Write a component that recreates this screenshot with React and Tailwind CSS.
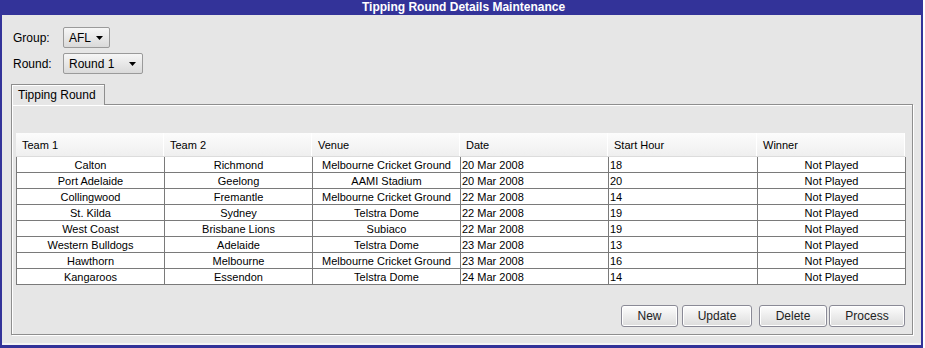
import React from "react";

const rows = [
  ["Calton", "Richmond", "Melbourne Cricket Ground", "20 Mar 2008", "18"],
  ["Port Adelaide", "Geelong", "AAMI Stadium", "20 Mar 2008", "20"],
  ["Collingwood", "Fremantle", "Melbourne Cricket Ground", "22 Mar 2008", "14"],
  ["St. Kilda", "Sydney", "Telstra Dome", "22 Mar 2008", "19"],
  ["West Coast", "Brisbane Lions", "Subiaco", "22 Mar 2008", "19"],
  ["Western Bulldogs", "Adelaide", "Telstra Dome", "23 Mar 2008", "13"],
  ["Hawthorn", "Melbourne", "Melbourne Cricket Ground", "23 Mar 2008", "16"],
  ["Kangaroos", "Essendon", "Telstra Dome", "24 Mar 2008", "14"],
];

const headers = ["Team 1", "Team 2", "Venue", "Date", "Start Hour", "Winner"];

function Arrow() {
  return (
    <svg width="7" height="4" viewBox="0 0 7 4" className="shrink-0">
      <polygon points="0,0 7,0 3.5,4" fill="#000" />
    </svg>
  );
}

function Combo({ label, width }) {
  return (
    <div
      className={`h-[21px] ${width} flex items-center justify-between pl-[5px] pr-[6px] border border-[#9a9a9a] rounded-[2px] bg-gradient-to-b from-[#f6f6f6] to-[#dadada] text-[12px] text-black`}
    >
      <span className="pt-px">{label}</span>
      <Arrow />
    </div>
  );
}

function Button({ children, width, className = "" }) {
  return (
    <div
      className={`h-[22px] ${width} ${className} flex items-center justify-center border border-[#8a8a96] rounded-[3px] bg-gradient-to-b from-[#fdfdfd] to-[#dcdcdc] text-[12px] text-[#222] shadow-[inset_0_0_0_1px_#fff]`}
    >
      {children}
    </div>
  );
}

export default function App() {
  return (
    <div className="w-[925px] h-[348px] bg-white font-['Liberation_Sans',Arial,sans-serif]">
      <div className="w-[923px] h-[348px] bg-[#333399] pl-[2px] pr-[2px] pb-[3px] flex flex-col">
        <div className="h-[15px] flex items-center pl-[360px] text-white font-bold text-[12px] leading-[15px]">
          Tipping Round Details Maintenance
        </div>
        <div className="flex-1 bg-[#e6e6e6] flex flex-col pl-[9px] pr-[6px] pt-[12px] border-b-[2px] border-[#f4f4f4]">
          <div className="flex items-center h-[21px]">
            <span className="w-[52px] pl-[2px] pt-px text-[12px] text-black">Group:</span>
            <Combo label="AFL" width="w-[47px]" />
          </div>
          <div className="flex items-center h-[21px] mt-[5px]">
            <span className="w-[52px] pl-[2px] pt-px text-[12px] text-black">Round:</span>
            <Combo label="Round 1" width="w-[80px]" />
          </div>
          <div className="mt-[10px] flex">
            <div className="h-[21px] w-[94px] border border-b-0 border-[#8e8e8e] shadow-[inset_1px_1px_0_#fff] flex items-center pl-[6px] text-[12px] text-black relative z-10 bg-[#e6e6e6] -mb-px">
              Tipping Round
            </div>
          </div>
          <div className="h-[231px] w-[902px] border border-[#8e8e8e] shadow-[inset_1px_1px_0_#fff,1px_1px_0_#fff] flex flex-col pl-[4px] pt-[28px]">
            <div className="w-[889px] text-[11px] text-black">
              <div className="grid grid-cols-[148px_148px_148px_148px_149px_148px] h-[24px] border-b border-[#dcdcdc]">
                {headers.map((h) => (
                  <div
                    key={h}
                    className="bg-gradient-to-b from-[#fcfcfc] to-[#efefef] border-r border-white flex items-center pl-[6px] pt-[2px]"
                  >
                    {h}
                  </div>
                ))}
              </div>
              <div className="border-l border-[#7a7a7a]">
                {rows.map((r, i) => (
                  <div
                    key={i}
                    className="grid grid-cols-[148px_148px_148px_148px_149px_148px] h-[16px] bg-white border-b border-[#7a7a7a]"
                  >
                    <div className="border-r border-[#7a7a7a] text-center leading-[15px] pt-px">{r[0]}</div>
                    <div className="border-r border-[#7a7a7a] text-center leading-[15px] pt-px">{r[1]}</div>
                    <div className="border-r border-[#7a7a7a] text-center leading-[15px] pt-px">{r[2]}</div>
                    <div className="border-r border-[#7a7a7a] pl-[1px] leading-[15px] pt-px">{r[3]}</div>
                    <div className="border-r border-[#7a7a7a] pl-[1px] leading-[15px] pt-px">{r[4]}</div>
                    <div className="border-r border-[#7a7a7a] text-center leading-[15px] pt-px">Not Played</div>
                  </div>
                ))}
              </div>
            </div>
            <div className="w-[889px] flex justify-end mt-[20px]">
              <Button width="w-[57px]">New</Button>
              <Button width="w-[70px]" className="ml-[4px]">Update</Button>
              <Button width="w-[68px]" className="ml-[7px]">Delete</Button>
              <Button width="w-[76px]" className="ml-[2px]">Process</Button>
            </div>
          </div>
        </div>
      </div>
    </div>
  );
}
